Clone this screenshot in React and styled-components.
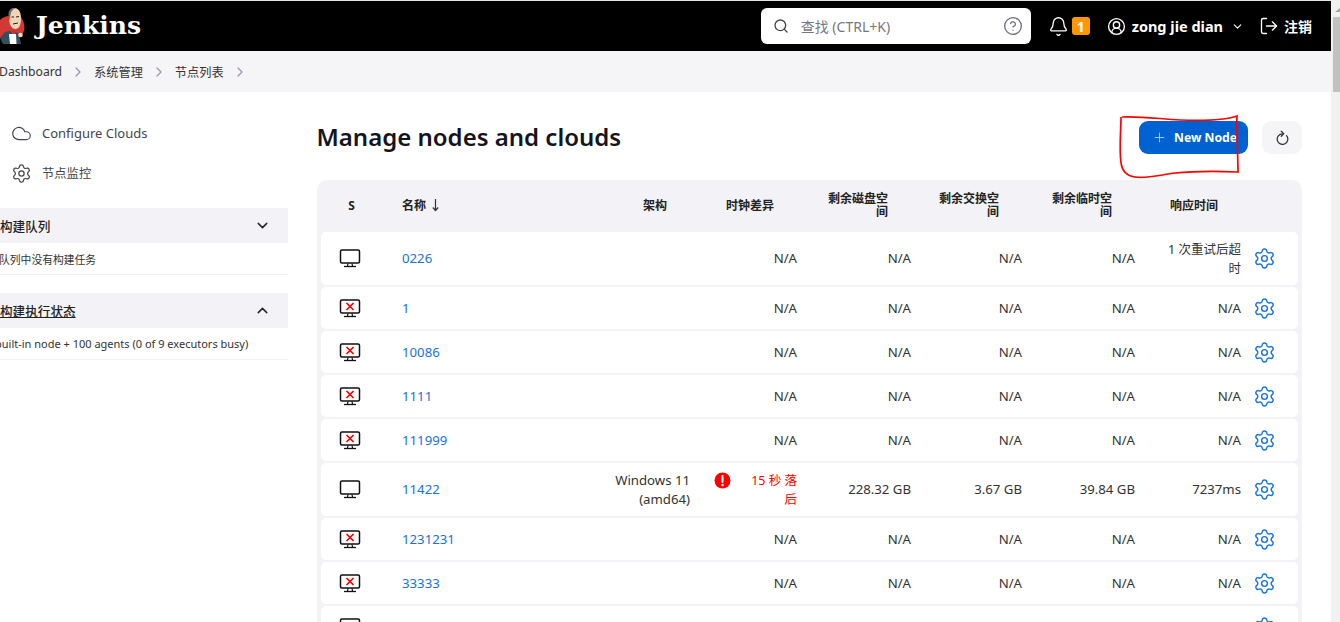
import React from 'react'
import styled, { createGlobalStyle } from 'styled-components'
import { Bell, ChevronDown, ChevronRight, ChevronUp, CircleHelp, CircleUserRound, Cloud, LogOut, Plus, Search, Settings } from 'lucide-react'

const FONT = `"Noto Sans", "Noto Sans CJK SC", sans-serif`

const GlobalStyle = createGlobalStyle`
  html, body { margin: 0; padding: 0; height: 100%; overflow: hidden; background: #fff; }
  body { font-family: ${FONT}; color: #333; }
  * { box-sizing: border-box; }
`
const Window = styled.div`
  display: flex;
  width: 1340px;
  height: 622px;
  overflow: hidden;
  position: relative;
`
const Page = styled.div`
  width: 1331px;
  flex: none;
  overflow: hidden;
`
const ScrollTrack = styled.div`
  flex: 1;
  background: #f1f1f1;
  display: flex;
  flex-direction: column;
  align-items: flex-end;
`
const ScrollArrow = styled.div`
  height: 17px;
  width: 7px;
  padding-top: 8px;
  &::before {
    content: '';
    display: block;
    margin-left: 2px;
    border-left: 5px solid transparent;
    border-bottom: 4px solid #a3a3a3;
  }
`
const ScrollThumb = styled.div`
  width: 7px;
  height: 75px;
  background: #c1c1c1;
`
const Header = styled.header`
  height: 51px;
  background: #000;
  border-top: 1px solid #e6e6e6;
  display: flex;
  align-items: center;
  color: #fff;
`
const Brand = styled.div`
  display: flex;
  align-items: center;
  gap: 11px;
  flex: 1;
`
const BrandName = styled.span`
  font-family: "DejaVu Serif", serif;
  font-weight: 700;
  font-size: 25px;
  margin-top: -2px;
`
const SearchBox = styled.div`
  width: 270px;
  height: 36px;
  background: #fff;
  border-radius: 6px;
  display: flex;
  align-items: center;
  padding: 0 8px 0 12px;
  gap: 12px;
  color: #777;
  font-size: 14px;
  margin-right: 17px;
  margin-top: -1px;
`
const SearchText = styled.span`
  flex: 1;
  color: #77777f;
`
const Badge = styled.span`
  width: 18px;
  height: 18px;
  border-radius: 3px;
  background: #ff9800;
  font-weight: 700;
  font-size: 14px;
  display: flex;
  align-items: center;
  justify-content: center;
  margin-left: 3px;
`
const HeaderGroup = styled.div`
  display: flex;
  align-items: center;
  margin-right: ${props => props.$gap}px;
  font-weight: 700;
  font-size: ${props => props.$size || 14}px;
  gap: ${props => props.$inner || 0}px;
`
const Breadcrumbs = styled.nav`
  height: 41px;
  background: #f5f5f7;
  display: flex;
  align-items: center;
  font-size: 12.2px;
  color: #333;
  gap: 8px;
  margin-left: -1px;
`
const Crumb = styled.span`
  margin-right: 0;
`
const CrumbArrow = styled(ChevronRight)`
  color: #9a9ab0;
`
const Body = styled.div`
  display: flex;
`
const Sidebar = styled.aside`
  width: 288px;
  flex: none;
  padding-top: 21px;
`
const TaskLink = styled.div`
  height: 40px;
  display: flex;
  align-items: center;
  gap: 10px;
  padding-left: 11px;
  font-size: ${props => props.$size}px;
  color: #44444c;
`
const Pane = styled.section`
  margin-top: ${props => props.$top}px;
`
const PaneHeader = styled.div`
  height: 35px;
  background: #f3f3f7;
  display: flex;
  align-items: center;
  justify-content: space-between;
  padding-right: 17px;
  font-size: 12.6px;
  font-weight: 500;
  color: #222;
  text-decoration: ${props => props.$link ? 'underline' : 'none'};
`
const PaneBody = styled.div`
  height: 32px;
  display: flex;
  align-items: center;
  font-size: ${props => props.$size}px;
  color: #333;
  white-space: nowrap;
  overflow: hidden;
  border-bottom: 1px solid #efeff3;
`
const PaneText = styled.span`
  margin-left: ${props => props.$shift}px;
`
const Main = styled.main`
  flex: 1;
  padding: 29px 29px 0 29px;
`
const TitleBar = styled.div`
  display: flex;
  align-items: center;
  height: 33px;
  gap: 14px;
  margin-bottom: 26px;
`
const Title = styled.h1`
  flex: 1;
  margin: -2px 0 0 -0.5px;
  font-size: 24px;
  font-weight: 600;
  color: #14141f;
`
const NewNodeButton = styled.button`
  width: 109px;
  height: 33px;
  border: none;
  border-radius: 9px;
  background: #0062d1;
  color: #fff;
  font-family: ${FONT};
  font-weight: 700;
  font-size: 12.2px;
  display: flex;
  align-items: center;
  padding: 0 0 1px 13px;
  gap: 7px;
`
const RefreshButton = styled.button`
  width: 40px;
  height: 33px;
  border: none;
  border-radius: 9px;
  background: #f5f5f7;
  color: #333;
  display: flex;
  align-items: center;
  justify-content: center;
  padding: 0;
`
const Scribble = styled.svg`
  position: absolute;
  left: 1110px;
  top: 108px;
  pointer-events: none;
`
const TableCard = styled.div`
  width: 985px;
  background: #f2f2f7;
  border-radius: 10px 10px 0 0;
  padding: 0 4px;
  display: flex;
  flex-direction: column;
  gap: 2px;
`
const COLUMNS = '60px 219px 99px 107px 114px 111px 113px 106px 47px'

const HeaderRow = styled.div`
  display: grid;
  grid-template-columns: ${COLUMNS};
  height: 50px;
  align-items: center;
  font-size: 12px;
  font-weight: 600;
  line-height: 13px;
  color: #222;
`
const HeaderCell = styled.div`
  padding-right: 32px;
  display: flex;
  justify-content: flex-end;
  text-align: right;
`
const HeaderLabel = styled.span`
  max-width: 62px;
`
const StatusHead = styled.div`
  text-align: center;
  font-weight: 700;
  padding-left: 1px;
`
const NameHead = styled.div`
  padding-left: 21px;
  display: flex;
  align-items: center;
  gap: 5px;
  font-weight: 600;
`
const Row = styled.div`
  display: grid;
  grid-template-columns: ${COLUMNS};
  min-height: 42px;
  background: #fff;
  border-radius: 5px;
  align-items: center;
  font-size: 13.2px;
  line-height: 19px;
  padding: ${props => props.$tall ? '7.5px' : '0'} 0;
  color: #333;
`
const StatusCell = styled.div`
  display: flex;
  justify-content: center;
  padding-right: 2px;
`
const NameLink = styled.a`
  padding-left: 21px;
  color: #1a73d9;
`
const Cell = styled.div`
  padding: 0 9px 0 0;
  text-align: right;
`
const CjkText = styled.span`
  font-size: 12.5px;
`
const RetryCell = styled(Cell)`
  padding-left: 20px;
`
const ArchCell = styled(Cell)`
  padding-left: 10px;
`
const LagCell = styled.div`
  padding: 0 9px 0 15px;
  display: flex;
  text-align: right;
  color: #f00;
  gap: 15px;
`
const LagText = styled.span`
  flex: 1;
  font-size: 12.5px;
`
const LagIcon = styled.svg`
  flex: none;
  margin-top: 1px;
`
const GearCell = styled.div`
  display: flex;
  justify-content: center;
  color: #1a73d9;
  padding-right: 19px;
`

const nodes = [
  { name: '0226', online: true, retry: '1 次重试后超时' },
  { name: '1' },
  { name: '10086' },
  { name: '1111' },
  { name: '111999' },
  { name: '11422', online: true, arch: 'Windows 11 (amd64)', lag: '15 秒 落后', disk: '228.32 GB', swap: '3.67 GB', temp: '39.84 GB', response: '7237ms' },
  { name: '1231231' },
  { name: '33333' },
  { name: '4444', online: true },
]

const JenkinsLogo = () => (
  <svg width="25" height="37" viewBox="0 0 25 37">
    <path d="M0 12 C3 9 6 8 9 8 L20 8 C24 12 26 20 23 25 C21 29 18 30 16 30 L0 30 Z" fill="#d33833" />
    <path d="M5 24 C9 22 16 23 19 26 L21 36 L3 36 L0 30 Z" fill="#335061" />
    <path d="M9 6 C9 2 12 0 15 0 C20 1 21 6 21 11 C21 17 19 21 15 21 C12 21 9 16 9 11 Z" fill="#f0d6b7" />
    <path d="M9 9 C7 3 11 -1 16 0 C13 1 11 3 10.5 7 C10 9 10 12 9.5 13 Z" fill="#6d6b6d" />
    <path d="M10 22 L16 25 L13 27 Z" fill="#d33833" />
    <path d="M11.5 9 L14 9 M16 9 L19 8.5 M13 16 L18 15" stroke="#231f20" strokeWidth="1" fill="none" />
    <path d="M9 26 L16 26 L16.5 36 L10 36 Z" fill="#fff" />
    <circle cx="20.5" cy="27" r="2.3" fill="#f0d6b7" />
  </svg>
)

const MonitorIcon = ({ offline }) => (
  <svg width="22" height="19" viewBox="0 0 22 19">
    <rect x="1.5" y="1" width="19" height="13" rx="1.5" fill="#fff" stroke="#111" strokeWidth="1.5" />
    <path d="M9 14.5 L8.5 17 M13 14.5 L13.5 17" stroke="#111" strokeWidth="1.2" />
    <path d="M5 17.5 H17" stroke="#111" strokeWidth="1.3" />
    {offline && <path d="M7.5 4 L14.5 11 M14.5 4 L7.5 11" stroke="#f00" strokeWidth="1.7" />}
  </svg>
)

const ReloadIcon = () => (
  <svg width="15" height="15" viewBox="0 0 24 24" fill="none" stroke="#333" strokeWidth="2" strokeLinecap="round" strokeLinejoin="round">
    <path d="M18.5 9 A8.5 8.5 0 1 1 12 6" />
    <path d="M10 2 L14 6 L10 10" />
  </svg>
)

const SortArrow = () => (
  <svg width="9" height="14" viewBox="0 0 9 14" fill="none" stroke="#333" strokeWidth="1.2">
    <path d="M4.5 1 V12.5 M1.8 9.5 L4.5 12.5 L7.2 9.5" />
  </svg>
)

function NodeRow({ node }) {
  const na = 'N/A'
  return (
    <Row $tall={node.arch || node.retry}>
      <StatusCell><MonitorIcon offline={!node.online} /></StatusCell>
      <NameLink>{node.name}</NameLink>
      <ArchCell>{node.arch}</ArchCell>
      {node.lag ? (
        <LagCell>
          <LagIcon width="17" height="17" viewBox="0 0 17 17">
            <circle cx="8.5" cy="8.5" r="8" fill="#f00" />
            <path d="M8.5 4 V10" stroke="#fff" strokeWidth="2" strokeLinecap="round" />
            <circle cx="8.5" cy="13" r="1.2" fill="#fff" />
          </LagIcon>
          <LagText>{node.lag}</LagText>
        </LagCell>
      ) : <Cell>{na}</Cell>}
      <Cell>{node.disk || na}</Cell>
      <Cell>{node.swap || na}</Cell>
      <Cell>{node.temp || na}</Cell>
      {node.retry
        ? <RetryCell><CjkText>{node.retry}</CjkText></RetryCell>
        : <Cell>{node.response || na}</Cell>}
      <GearCell><Settings size={23} strokeWidth={1.5} /></GearCell>
    </Row>
  )
}

export default function App() {
  return (
    <Window>
      <GlobalStyle />
      <Page>
        <Header>
          <Brand>
            <JenkinsLogo />
            <BrandName>Jenkins</BrandName>
          </Brand>
          <SearchBox>
            <Search size={16} color="#444" />
            <SearchText>查找 (CTRL+K)</SearchText>
            <CircleHelp size={20} color="#66667a" strokeWidth={1.5} />
          </SearchBox>
          <HeaderGroup $gap={17}>
            <Bell size={21} strokeWidth={1.5} />
            <Badge>1</Badge>
          </HeaderGroup>
          <HeaderGroup $gap={15} $inner={6} $size={14.5}>
            <CircleUserRound size={19} strokeWidth={1.7} />
            zong jie dian
            <ChevronDown size={13} style={{ marginLeft: 2 }} />
          </HeaderGroup>
          <HeaderGroup $gap={19} $inner={5}>
            <LogOut size={20} strokeWidth={1.6} />
            注销
          </HeaderGroup>
        </Header>
        <Breadcrumbs>
          <Crumb>Dashboard</Crumb>
          <CrumbArrow size={16} />
          <Crumb>系统管理</Crumb>
          <CrumbArrow size={16} />
          <Crumb>节点列表</Crumb>
          <CrumbArrow size={16} />
        </Breadcrumbs>
        <Body>
          <Sidebar>
            <TaskLink $size={13}><Cloud size={21} strokeWidth={1.3} />Configure Clouds</TaskLink>
            <TaskLink $size={12.3}><Settings size={21} strokeWidth={1.4} />节点监控</TaskLink>
            <Pane $top={15}>
              <PaneHeader>构建队列<ChevronDown size={17} /></PaneHeader>
              <PaneBody $size={10.8}><PaneText $shift={-1}>队列中没有构建任务</PaneText></PaneBody>
            </Pane>
            <Pane $top={18}>
              <PaneHeader $link>构建执行状态<ChevronUp size={17} /></PaneHeader>
              <PaneBody $size={11}><PaneText $shift={-5}>built-in node + 100 agents (0 of 9 executors busy)</PaneText></PaneBody>
            </Pane>
          </Sidebar>
          <Main>
            <TitleBar>
              <Title>Manage nodes and clouds</Title>
              <NewNodeButton><Plus size={15} strokeWidth={1.5} color="#a9cdf5" />New Node</NewNodeButton>
              <RefreshButton><ReloadIcon /></RefreshButton>
            </TitleBar>
            <TableCard>
              <HeaderRow>
                <StatusHead>S</StatusHead>
                <NameHead>名称<SortArrow /></NameHead>
                <HeaderCell><HeaderLabel>架构</HeaderLabel></HeaderCell>
                <HeaderCell><HeaderLabel>时钟差异</HeaderLabel></HeaderCell>
                <HeaderCell><HeaderLabel>剩余磁盘空间</HeaderLabel></HeaderCell>
                <HeaderCell><HeaderLabel>剩余交换空间</HeaderLabel></HeaderCell>
                <HeaderCell><HeaderLabel>剩余临时空间</HeaderLabel></HeaderCell>
                <HeaderCell><HeaderLabel>响应时间</HeaderLabel></HeaderCell>
                <div />
              </HeaderRow>
              {nodes.map(node => <NodeRow key={node.name} node={node} />)}
            </TableCard>
          </Main>
        </Body>
      </Page>
      <ScrollTrack><ScrollArrow /><ScrollThumb /></ScrollTrack>
      <Scribble width="140" height="80" viewBox="0 0 140 80" fill="none">
        <path d="M12 9 C30 8 50 11 70 12 C95 13 115 12 127 8 C126 25 128 45 128 64 C105 63 85 63 65 65 C50 67 35 71 25 69 C16 68 12 62 11 55 C9 40 11 22 11 9" stroke="#f00" strokeWidth="1.7" />
      </Scribble>
    </Window>
  )
}
